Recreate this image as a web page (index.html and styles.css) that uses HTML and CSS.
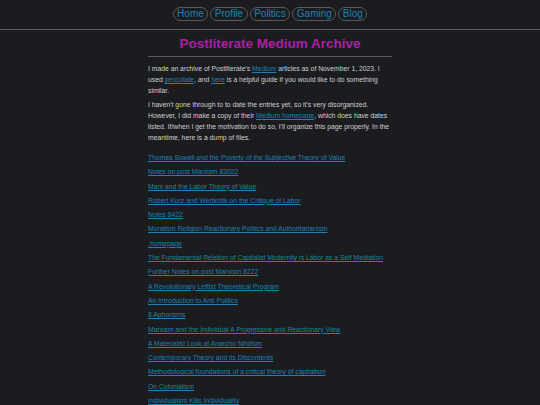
FILE: index.html
```html
<!DOCTYPE html>
<html lang="en">
<head>
<meta charset="utf-8">
<title>Postliterate Medium Archive</title>
<link rel="stylesheet" href="styles.css">
</head>
<body>
<header class="topbar">
  <nav class="nav">
    <a class="pill" href="#">Home</a>
    <a class="pill" href="#">Profile</a>
    <a class="pill" href="#">Politics</a>
    <a class="pill" href="#">Gaming</a>
    <a class="pill" href="#">Blog</a>
  </nav>
</header>
<main class="content">
  <h1 class="title">Postliterate Medium Archive</h1>
  <hr class="rule">
  <p class="para">I made an archive of Postliterate's <a href="#">Medium</a> articles as of November 1, 2023. I used <a href="#">percollate</a>, and <a href="#">here</a> is a helpful guide if you would like to do something similar.</p>
  <p class="para">I haven't gone through to to date the entries yet, so it's very disorganized. However, I did make a copy of their <a href="#">Medium homepage</a>, which does have dates listed. If/when I get the motivation to do so, I'll organize this page properly. In the meantime, here is a dump of files.</p>
  <ul class="files">
    <li><a href="#">Thomas Sowell and the Poverty of the Subjective Theory of Value</a></li>
    <li><a href="#">Notes on post Marxism 83022</a></li>
    <li><a href="#">Marx and the Labor Theory of Value</a></li>
    <li><a href="#">Robert Kurz and Wertkritik on the Critique of Labor</a></li>
    <li><a href="#">Notes 8422</a></li>
    <li><a href="#">Moralism Religion Reactionary Politics and Authoritarianism</a></li>
    <li><a href="#">.homepage</a></li>
    <li><a href="#">The Fundamental Relation of Capitalist Modernity is Labor as a Self Mediation</a></li>
    <li><a href="#">Further Notes on post Marxism 8222</a></li>
    <li><a href="#">A Revolutionary Leftist Theoretical Program</a></li>
    <li><a href="#">An Introduction to Anti Politics</a></li>
    <li><a href="#">8 Aphorisms</a></li>
    <li><a href="#">Marxism and the Individual A Progressive and Reactionary View</a></li>
    <li><a href="#">A Materialist Look at Anarcho Nihilism</a></li>
    <li><a href="#">Contemporary Theory and its Discontents</a></li>
    <li><a href="#">Methodological foundations of a critical theory of capitalism</a></li>
    <li><a href="#">On Colonialism</a></li>
    <li><a href="#">Individualism Kills Individuality</a></li>
  </ul>
</main>
</body>
</html>
```
FILE: styles.css
```css
html, body {
  margin: 0;
  padding: 0;
  background: #1b1c1f;
}
body {
  font-family: "Liberation Sans", Arial, sans-serif;
  color: #cfcfcf;
  font-size: 6.8px;
  line-height: 11px;
}
a {
  color: #1e82b4;
}
.topbar {
  border-bottom: 1px solid #5a5a5a;
  padding: 7px 0 8px;
}
.nav {
  display: flex;
  justify-content: center;
  gap: 2px;
}
.pill {
  font-size: 10px;
  line-height: 12px;
  color: #1e82b4;
  text-decoration: none;
  border: 1px solid #5a5a5a;
  border-radius: 8px;
  padding: 0 3.5px;
}
.content {
  width: 244px;
  margin: 0 auto;
}
.title {
  margin: 6px 0 0;
  text-align: center;
  font-size: 13.5px;
  line-height: 16px;
  font-weight: bold;
  color: #ad1fa6;
}
.rule {
  border: 0;
  border-top: 1px solid #5a5a5a;
  margin: 4px 0 6px;
}
.para {
  margin: 0 0 3px;
}
.files {
  list-style: none;
  margin: 9px 0 0;
  padding: 0;
  display: flex;
  flex-direction: column;
  gap: 3.3px;
}
```
